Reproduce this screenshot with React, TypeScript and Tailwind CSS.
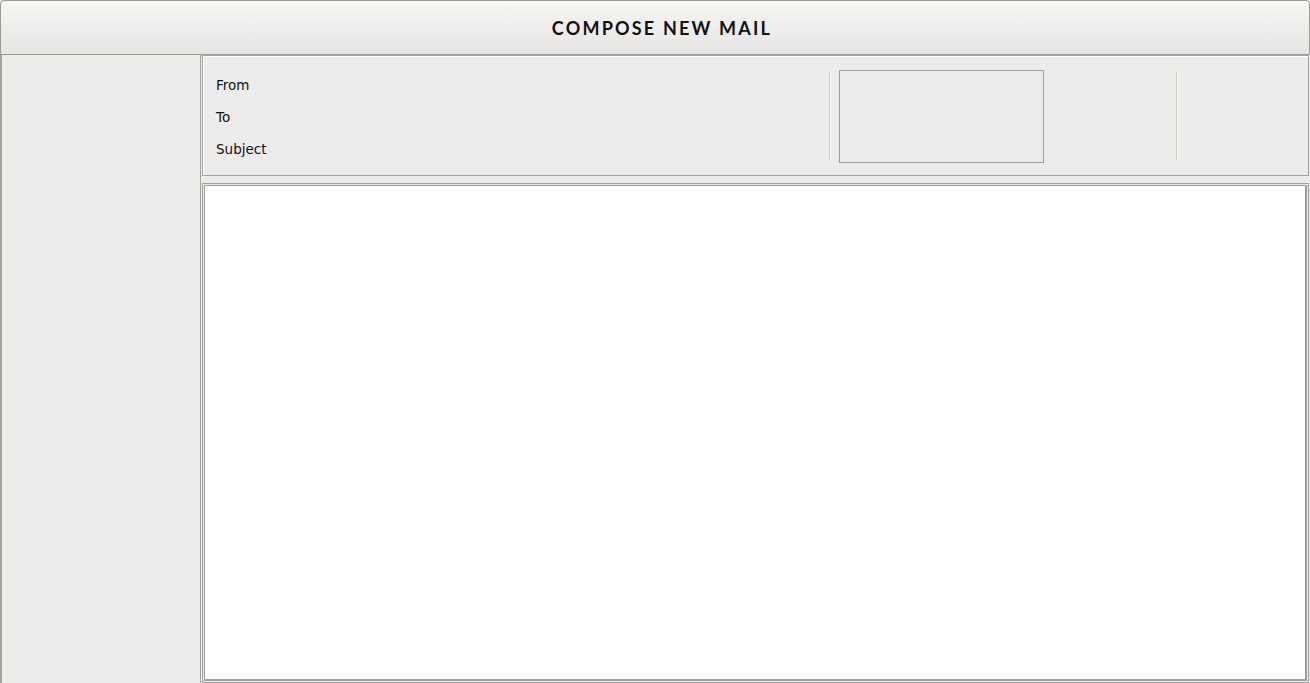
import React from 'react';

const Divider: React.FC = () => (
  <div className="mt-[16px] h-[89px] w-[2px] shrink-0 border-l border-[#c8c7c4] bg-white" />
);

const App: React.FC = () => {
  return (
    <div className="flex h-[683px] w-[1310px] flex-col overflow-hidden bg-[#edecea] font-['DejaVu_Sans',sans-serif] text-black">
      <header className="flex h-[55px] shrink-0 items-center justify-center rounded-t-[4px] border border-[#9b9a97] bg-gradient-to-b from-[#f6f6f5] to-[#e6e5e3]">
        <h1 className="pl-[14px] pt-[1px] font-['Lato',sans-serif] text-[18px] font-bold tracking-[2.2px] text-[#111]">COMPOSE NEW MAIL</h1>
      </header>

      <div className="flex min-h-0 flex-1">
        <aside className="w-[201px] shrink-0 border-x border-l-2 border-[#a3a19e] bg-[#edecea]" />

        <main className="flex min-w-0 flex-1 flex-col pl-[1px] pr-[1px]">
          <section className="flex h-[121px] shrink-0 items-start border border-[#a3a3a3] bg-[#edecea] shadow-[inset_1px_1px_0_#ffffff]">
            <div className="w-[626px] shrink-0 pl-[13px] pt-[13px] text-[13.5px] leading-[32px] text-[#111]">
              <div>From</div>
              <div>To</div>
              <div>Subject</div>
            </div>
            <Divider />
            <div className="ml-[8px] mt-[14px] h-[93px] w-[205px] shrink-0 border border-[#a0a0a0]" />
            <div className="w-[132px] shrink-0" />
            <Divider />
          </section>

          <section className="mt-[7px] flex min-h-0 flex-1 border border-[#a0a0a0] p-[1px]">
            <div className="flex-1 border border-r-2 border-b-2 border-[#a09e9b] bg-white" />
          </section>
        </main>
      </div>
    </div>
  );
};

export default App;
